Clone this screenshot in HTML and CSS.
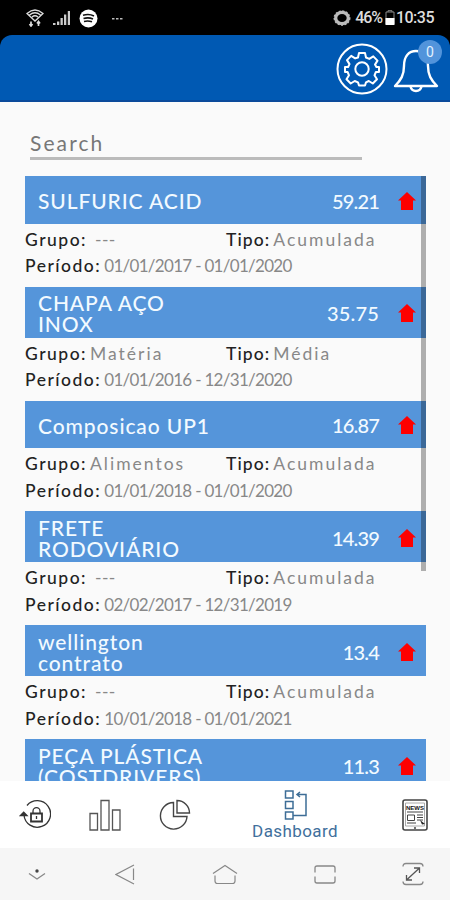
FILE: index.html
```html
<!DOCTYPE html>
<html lang="pt">
<head>
  <meta charset="UTF-8" />
  <meta name="viewport" content="width=device-width, initial-scale=1" />
  <title>Dashboard</title>
  <link rel="stylesheet" href="styles.css">
</head>
<body>
  <div class="phone">
    <div class="statusbar">
      <div class="status-left">
        <svg width="18" height="18" viewBox="0 0 18 18" fill="none" stroke="#ddd" stroke-width="1.3">
          <path d="M1 4.500Q9-2.500 17 4.500L9 12ZM3.500 6Q9 1.500 14.500 6M6 8Q9 5.500 12 8" />
          <path d="M5 12.500v4M3.500 15l1.500 2 1.500-2M12.500 17v-4M11 14.500l1.500-2 1.500 2" stroke-width="1.700" />
        </svg>
        <svg class="signal" width="18" height="16" viewBox="0 0 18 16" fill="#ccc">
          <path d="M0 13h2.500v2H0zM4 11.500h2.300v3.500H4zM7.500 8h2.300v7H7.500zM11 4.500h2.300V15H11zM14.800 1h2.200v14h-2.200z" />
        </svg>
        <svg class="spot" width="19" height="19" viewBox="0 0 19 19">
          <circle cx="9.500" cy="9.500" r="9" fill="#fff" />
          <path d="M4 6.300q6-2 11 .7M4.500 9.500q5-1.500 9.500.5M5 12.500q4-1 8 .3" fill="none" stroke="#111" stroke-width="1.600" />
        </svg>
        <svg class="more" width="12" height="4" viewBox="0 0 12 4" fill="#bbb">
          <path d="M1 2h2.500v1.500H1zM5 2h2.500v1.500H5zM9 2h2.500v1.500H9z" />
        </svg>
      </div>
      <div class="status-right">
        <svg width="18" height="18" viewBox="0 0 18 18" fill="none" stroke="#bbb">
          <ellipse cx="9" cy="9" rx="6.300" ry="5.700" stroke-width="3.200" />
          <ellipse cx="9" cy="9" rx="7.800" ry="7" stroke-width="1.400" stroke-dasharray="2 1.500" />
        </svg>
        <span class="percent">46%</span>
        <svg class="battery" width="10" height="16" viewBox="0 0 10 16">
          <path d="M3 2V.7h4V2M1 2h8v12H1z" fill="none" stroke="#888" stroke-width="1" />
          <path d="M.5 8h9v7h-9z" fill="#fff" />
        </svg>
        <span class="clock">10:35</span>
      </div>
    </div>

    <header class="header">
      <svg class="gear" width="52" height="52" viewBox="0 0 52 52" fill="none" stroke="#fff" stroke-width="2">
        <circle cx="26" cy="26" r="24.500" />
        <circle cx="26" cy="26" r="6.700" />
        <path stroke-linejoin="round" d="M23 10h6l1 4.500 3.300 1.400 4-2.500 4.200 4.200-2.500 4L40.400 24l2.600 0v5l-3.100 0-1.400 3.300 2.500 4-4.200 4.200-4-2.500L30 39.400l-1 3.100h-6l-1-3.100-3.300-1.400-4 2.500-4.200-4.200 2.500-4L11.600 29l-2.600 0v-5l3.100 0 1.400-2.900-2.500-4 4.200-4.200 4 2.500L22 14.500z" />
      </svg>
      <div class="bell">
        <svg width="46" height="44" viewBox="0 0 46 44" fill="none" stroke="#fff" stroke-width="2.400" stroke-linejoin="round">
          <path d="M2 37C8 31 11 26 11 17 11 7 16 2 23 2S35 7 35 17C35 26 38 31 44 37Z" />
          <path d="M17.500 37.500Q18.500 42 23 42T28.500 37.500" />
        </svg>
        <span class="badge">0</span>
      </div>
    </header>

    <main class="content">
      <div class="search">Search</div>
      <div class="list">
        <div class="scrollbar"></div>

        <div class="item">
          <div class="bar">
            <span class="name">SULFURIC ACID</span>
            <span class="value narrow">59.21</span>
            <svg class="arrow" width="18" height="18" viewBox="0 0 18 18"><path d="M9 0l9 8.500h-3V18H3V8.500H0z" /></svg>
          </div>
          <div class="details">
            <div class="group"><b>Grupo:</b><span class="dashes">---</span></div>
            <div><b class="type">Tipo:</b><span>Acumulada</span></div>
            <div class="period"><b>Período:</b><span>01/01/2017 - 01/01/2020</span></div>
          </div>
        </div>

        <div class="item">
          <div class="bar tall">
            <span class="name">CHAPA AÇO INOX</span>
            <span class="value">35.75</span>
            <svg class="arrow" width="18" height="18" viewBox="0 0 18 18"><path d="M9 0l9 8.500h-3V18H3V8.500H0z" /></svg>
          </div>
          <div class="details">
            <div class="group"><b>Grupo:</b><span>Matéria</span></div>
            <div><b class="type">Tipo:</b><span>Média</span></div>
            <div class="period"><b>Período:</b><span>01/01/2016 - 12/31/2020</span></div>
          </div>
        </div>

        <div class="item">
          <div class="bar">
            <span class="name">Composicao UP1</span>
            <span class="value narrow">16.87</span>
            <svg class="arrow" width="18" height="18" viewBox="0 0 18 18"><path d="M9 0l9 8.500h-3V18H3V8.500H0z" /></svg>
          </div>
          <div class="details">
            <div class="group"><b>Grupo:</b><span>Alimentos</span></div>
            <div><b class="type">Tipo:</b><span>Acumulada</span></div>
            <div class="period"><b>Período:</b><span>01/01/2018 - 01/01/2020</span></div>
          </div>
        </div>

        <div class="item">
          <div class="bar tall">
            <span class="name">FRETE RODOVIÁRIO</span>
            <span class="value narrow">14.39</span>
            <svg class="arrow" width="18" height="18" viewBox="0 0 18 18"><path d="M9 0l9 8.500h-3V18H3V8.500H0z" /></svg>
          </div>
          <div class="details">
            <div class="group"><b>Grupo:</b><span class="dashes">---</span></div>
            <div><b class="type">Tipo:</b><span>Acumulada</span></div>
            <div class="period"><b>Período:</b><span>02/02/2017 - 12/31/2019</span></div>
          </div>
        </div>

        <div class="item">
          <div class="bar tall">
            <span class="name">wellington contrato</span>
            <span class="value narrow">13.4</span>
            <svg class="arrow" width="18" height="18" viewBox="0 0 18 18"><path d="M9 0l9 8.500h-3V18H3V8.500H0z" /></svg>
          </div>
          <div class="details">
            <div class="group"><b>Grupo:</b><span class="dashes">---</span></div>
            <div><b class="type">Tipo:</b><span>Acumulada</span></div>
            <div class="period"><b>Período:</b><span>10/01/2018 - 01/01/2021</span></div>
          </div>
        </div>

        <div class="item">
          <div class="bar tall">
            <span class="name">PEÇA PLÁSTICA (COSTDRIVERS)</span>
            <span class="value narrow">11.3</span>
            <svg class="arrow" width="18" height="18" viewBox="0 0 18 18"><path d="M9 0l9 8.500h-3V18H3V8.500H0z" /></svg>
          </div>
        </div>
      </div>
    </main>

    <nav class="tabs">
      <div class="tab">
        <svg width="32" height="30" viewBox="0 0 32 30" fill="none" stroke="#333" stroke-width="1.300">
          <path d="M8 5.500A13.300 13.300 0 1 1 5 15" />
          <path d="M1.500 15.500l3.200-3.300 3.300 3.300z" fill="#333" />
          <path d="M12 13.500h11v8H12z" stroke-width="1.800" />
          <path d="M14 13.500v-2.300a3.500 3.500 0 0 1 7 0v2.300M17.500 16v3" />
        </svg>
      </div>
      <div class="tab">
        <svg width="32" height="32" viewBox="0 0 32 32" fill="none" stroke="#555" stroke-width="1.300">
          <path d="M1 14.500h7.500V31H1zM12 1.500h8V31h-8zM23.500 11H31v20h-7.500z" />
        </svg>
      </div>
      <div class="tab">
        <svg width="32" height="32" viewBox="0 0 32 32" fill="none" stroke="#444" stroke-width="1.400">
          <path d="M14.500 3.500A13.300 13.300 0 1 0 28 17.500H14.500z" />
          <path d="M18 1.500v12.500h12.500A12.500 12.500 0 0 0 18 1.500z" />
        </svg>
      </div>
      <div class="tab active">
        <svg width="24" height="32" viewBox="0 0 24 32" fill="none" stroke="#3d6d96" stroke-width="1.500">
          <path d="M2.500 2H10v7H2.500zM2.500 12.500H10v7H2.500zM2.500 23H10v7H2.500z" />
          <path d="M10 26.500h13V5.500H14M17 3l-3 2.500 3 2.500" />
        </svg>
        <span>Dashboard</span>
      </div>
      <div class="tab">
        <svg width="26" height="32" viewBox="0 0 26 32" fill="none" stroke="#444">
          <rect x="1" y="1" width="24" height="30" rx="2" stroke-width="1.600" />
          <path d="M3.500 4h19v23h-19z" stroke="#aaa" />
          <text class="news" x="13" y="10.500" text-anchor="middle">NEWS</text>
          <path d="M5 13h16M15 16h6M15 18.500h6M15 21h6M5 24h9" stroke-width="1.200" />
          <path d="M5.500 16h7v5.500h-7z" />
          <path d="M18 21l5 4-3 .5z" fill="#222" stroke="none" />
          <circle cx="13" cy="29" r=".7" />
        </svg>
      </div>
    </nav>

    <div class="navbar">
      <svg width="18" height="14" viewBox="0 0 18 14" fill="none" stroke="#888" stroke-width="1.300">
        <path d="M1 6.500l8 5.500 8-5.500" /><circle cx="9" cy="4" r="1.700" fill="#444" stroke="none" />
      </svg>
      <svg width="20" height="21" viewBox="0 0 20 21" fill="none" stroke="#888" stroke-width="1.200">
        <path d="M19 1L1 10.500 19 20M18.500 4.500v11.500" />
      </svg>
      <svg width="26" height="21" viewBox="0 0 26 21" fill="none" stroke="#888" stroke-width="1.200">
        <path d="M1 9.500L13 1.500l12 8M3 11.500V17q0 2.500 2.500 2.500h15Q23 19.500 23 17v-5.500" />
      </svg>
      <svg width="22" height="19" viewBox="0 0 22 19" fill="none" stroke="#888" stroke-width="1.300">
        <path d="M1 7.500V3q0-2 2-2h16q2 0 2 2v4.500M1 11.500V16q0 2 2 2h16q2 0 2-2v-4.500" />
      </svg>
      <svg width="22" height="24" viewBox="0 0 22 24" fill="none" stroke="#888" stroke-width="1.300">
        <path d="M1 4.500q0-3 3-3h14q3 0 3 3M1 19.500q0 3 3 3h14q3 0 3-3" />
        <path d="M4.500 18L17.500 6M12 6h5.500v5M4.500 13v5H10" stroke="#555" />
      </svg>
    </div>
  </div>
</body>
</html>
```
FILE: styles.css
```css
* {
  box-sizing: border-box;
}

body {
  margin: 0;
  background: #000;
  font-family: Lato, "Open Sans", sans-serif;
}

.phone {
  width: 450px;
  height: 900px;
  display: flex;
  flex-direction: column;
  overflow: hidden;
}

.statusbar {
  height: 35px;
  flex: none;
  display: flex;
  justify-content: space-between;
  padding: 0 16px 0 26px;
  background: #000;
  color: #ddd;
  font: 500 16px/20px Roboto, sans-serif;
}

.status-left,
.status-right {
  display: flex;
  align-items: center;
  padding-top: 1px;
}

.signal {
  margin-left: 9px;
}

.spot {
  margin-left: 8px;
}

.more {
  margin-left: 13px;
}

.percent {
  margin-left: 4px;
  letter-spacing: -1.1px;
}

.battery {
  margin: 0 1px 0 3px;
}

.clock {
  letter-spacing: -0.5px;
}

.header {
  height: 67px;
  flex: none;
  display: flex;
  justify-content: flex-end;
  padding: 8px 11px 0 0;
  background: #0059b3;
  border-bottom: 2px solid #0b4a9b;
  border-radius: 12px 12px 0 0;
}

.bell {
  position: relative;
  margin: 6px 0 0 5px;
}

.badge {
  position: absolute;
  top: -9px;
  right: -3px;
  width: 24px;
  height: 24px;
  border-radius: 50%;
  background: #5294db;
  color: #e4f2ff;
  font: 14px/24px Roboto, sans-serif;
  text-align: center;
}

.content {
  flex: 1;
  min-height: 0;
  overflow: hidden;
  padding: 26px 24px 0 25px;
  background: #fafafa;
}

.search {
  width: 332px;
  height: 32px;
  margin-left: 5px;
  border-bottom: 3px solid #bbb;
  color: #777;
  font-size: 21px;
  line-height: 29px;
  letter-spacing: 2.1px;
}

.list {
  position: relative;
  margin-top: 16px;
}

.scrollbar {
  position: absolute;
  top: 0;
  right: 0;
  width: 5px;
  height: 395px;
  background: rgba(0, 0, 0, 0.3);
}

.bar {
  height: 47.5px;
  display: flex;
  align-items: center;
  padding: 2px 10px 0 13px;
  background: #5595da;
  color: #f2faff;
}

.bar.tall {
  height: 51px;
}

.name {
  width: 180px;
  font-size: 21px;
  font-weight: 500;
  line-height: 21px;
  letter-spacing: 0.9px;
}

.value {
  flex: 1;
  text-align: right;
  font-size: 20px;
  font-weight: 500;
  letter-spacing: 0.2px;
}

.value.narrow {
  letter-spacing: -0.8px;
}

.arrow {
  margin-left: 19px;
  fill: #fe0000;
}

.details {
  height: 63px;
  display: grid;
  grid-template-columns: 201px 1fr;
  grid-template-rows: 26.5px 26.5px;
  padding-top: 3px;
  color: #888;
  font-size: 17.5px;
  line-height: 26px;
  letter-spacing: 2px;
}

.details b {
  margin-right: 3px;
  color: #222;
  font-weight: 500;
  letter-spacing: 1.5px;
}

.details .type {
  letter-spacing: 1.1px;
}

.details .dashes {
  margin-left: 5px;
  letter-spacing: 0.4px;
}

.period {
  grid-column: 1 / 3;
}

.period span {
  font-size: 17px;
  letter-spacing: -0.7px;
}

.tabs {
  height: 67px;
  flex: none;
  display: grid;
  grid-template-columns: 70px 70px 70px 170px 70px;
  background: #fff;
}

.tab {
  display: flex;
  flex-direction: column;
  align-items: center;
  justify-content: center;
}

.active {
  justify-content: flex-start;
  padding-top: 8px;
  color: #416f9c;
  font: 17px/20px Roboto, sans-serif;
  letter-spacing: 0.4px;
}

.news {
  font: bold 6px "Liberation Sans", sans-serif;
  fill: #111;
  stroke: none;
}

.navbar {
  height: 52px;
  flex: none;
  display: grid;
  grid-template-columns: 74px 102px 98px 102px 74px;
  align-items: center;
  justify-items: center;
  background: #f6f6f6;
}
```
